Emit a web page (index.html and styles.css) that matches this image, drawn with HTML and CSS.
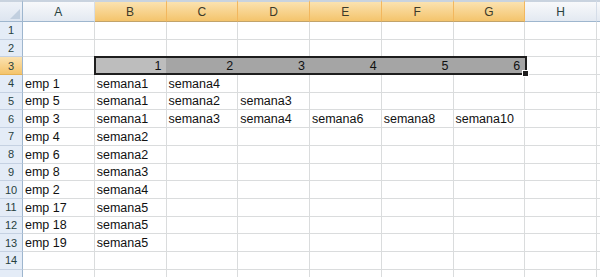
FILE: index.html
```html
<!DOCTYPE html>
<html>
<head>
  <meta charset="utf-8"/>
  <title>Hoja1</title>
  <link rel="stylesheet" href="styles.css">
</head>
<body>

<div class="sheet">
  <div class="corner"><span class="tri"></span></div>
  <div class="colhead">A</div>
  <div class="colhead sel">B</div>
  <div class="colhead sel">C</div>
  <div class="colhead sel">D</div>
  <div class="colhead sel">E</div>
  <div class="colhead sel">F</div>
  <div class="colhead sel">G</div>
  <div class="colhead">H</div>
  <div class="colhead"></div>

  <div class="rowhead">1</div><div class="cell"></div><div class="cell"></div><div class="cell"></div><div class="cell"></div><div class="cell"></div><div class="cell"></div><div class="cell"></div><div class="cell"></div><div class="cell"></div>
  <div class="rowhead">2</div><div class="cell"></div><div class="cell"></div><div class="cell"></div><div class="cell"></div><div class="cell"></div><div class="cell"></div><div class="cell"></div><div class="cell"></div><div class="cell"></div>
  <div class="rowhead sel">3</div><div class="cell"></div><div class="cell num active">1</div><div class="cell num shaded">2</div><div class="cell num shaded">3</div><div class="cell num shaded">4</div><div class="cell num shaded">5</div><div class="cell num shaded">6</div><div class="cell"></div><div class="cell"></div>
  <div class="rowhead">4</div><div class="cell">emp 1</div><div class="cell">semana1</div><div class="cell">semana4</div><div class="cell"></div><div class="cell"></div><div class="cell"></div><div class="cell"></div><div class="cell"></div><div class="cell"></div>
  <div class="rowhead">5</div><div class="cell">emp 5</div><div class="cell">semana1</div><div class="cell">semana2</div><div class="cell">semana3</div><div class="cell"></div><div class="cell"></div><div class="cell"></div><div class="cell"></div><div class="cell"></div>
  <div class="rowhead">6</div><div class="cell">emp 3</div><div class="cell">semana1</div><div class="cell">semana3</div><div class="cell">semana4</div><div class="cell">semana6</div><div class="cell">semana8</div><div class="cell">semana10</div><div class="cell"></div><div class="cell"></div>
  <div class="rowhead">7</div><div class="cell">emp 4</div><div class="cell">semana2</div><div class="cell"></div><div class="cell"></div><div class="cell"></div><div class="cell"></div><div class="cell"></div><div class="cell"></div><div class="cell"></div>
  <div class="rowhead">8</div><div class="cell">emp 6</div><div class="cell">semana2</div><div class="cell"></div><div class="cell"></div><div class="cell"></div><div class="cell"></div><div class="cell"></div><div class="cell"></div><div class="cell"></div>
  <div class="rowhead">9</div><div class="cell">emp 8</div><div class="cell">semana3</div><div class="cell"></div><div class="cell"></div><div class="cell"></div><div class="cell"></div><div class="cell"></div><div class="cell"></div><div class="cell"></div>
  <div class="rowhead">10</div><div class="cell">emp 2</div><div class="cell">semana4</div><div class="cell"></div><div class="cell"></div><div class="cell"></div><div class="cell"></div><div class="cell"></div><div class="cell"></div><div class="cell"></div>
  <div class="rowhead">11</div><div class="cell">emp 17</div><div class="cell">semana5</div><div class="cell"></div><div class="cell"></div><div class="cell"></div><div class="cell"></div><div class="cell"></div><div class="cell"></div><div class="cell"></div>
  <div class="rowhead">12</div><div class="cell">emp 18</div><div class="cell">semana5</div><div class="cell"></div><div class="cell"></div><div class="cell"></div><div class="cell"></div><div class="cell"></div><div class="cell"></div><div class="cell"></div>
  <div class="rowhead">13</div><div class="cell">emp 19</div><div class="cell">semana5</div><div class="cell"></div><div class="cell"></div><div class="cell"></div><div class="cell"></div><div class="cell"></div><div class="cell"></div><div class="cell"></div>
  <div class="rowhead">14</div><div class="cell"></div><div class="cell"></div><div class="cell"></div><div class="cell"></div><div class="cell"></div><div class="cell"></div><div class="cell"></div><div class="cell"></div><div class="cell"></div>
  <div class="rowhead"></div><div class="cell"></div><div class="cell"></div><div class="cell"></div><div class="cell"></div><div class="cell"></div><div class="cell"></div><div class="cell"></div><div class="cell"></div><div class="cell"></div>

  <!-- selection box over B3:G3 -->
  <div class="selection"><span class="handle"></span></div>
</div>

</body>
</html>
```

FILE: styles.css
```css
body {
  margin: 0;
  overflow: hidden;
  background: #fff;
  font-family: "Liberation Sans", Arial, sans-serif;
}
.sheet {
  position: relative;
  display: grid;
  grid-template-columns: 23px repeat(9, 71.75px);
  grid-template-rows: 22px repeat(15, 17.7px);
  width: 600px;
  overflow: hidden;
}
.corner, .colhead, .rowhead, .cell {
  box-sizing: border-box;
}
.corner {
  position: relative;
  background: linear-gradient(#eef2f8, #dde5f0);
  border-right: 1px solid #9eb6ce;
  border-bottom: 1px solid #9eb6ce;
  border-top: 2px solid #c9d3df;
}
.tri {
  position: absolute;
  right: 2px;
  bottom: 2px;
  width: 0;
  height: 0;
  border-left: 10px solid transparent;
  border-bottom: 10px solid #c1cfdf;
}
.colhead {
  display: flex;
  align-items: center;
  justify-content: center;
  padding-top: 1px;
  font-size: 12px;
  color: #27413e;
  background: linear-gradient(#f8f9fb, #e3e9f1);
  border-top: 2px solid #c9d3df;
  border-right: 1px solid #d5dde8;
  border-bottom: 1px solid #9eb6ce;
}
.colhead.sel {
  background: linear-gradient(#fbe2b0, #f4c46c);
  border-right-color: #f2b75e;
  border-bottom-color: #c2a36a;
  color: #3c3a2a;
}
.rowhead {
  display: flex;
  align-items: center;
  justify-content: center;
  font-size: 11px;
  color: #27413e;
  background: #e4ecf7;
  border-right: 1px solid #9eb6ce;
  border-bottom: 1px solid #c5d1e2;
}
.rowhead.sel {
  background: linear-gradient(#fbe2b0, #f4c46c);
  border-bottom-color: #e5b255;
}
.cell {
  display: flex;
  align-items: flex-end;
  padding: 0 2px 1px 2px;
  font-size: 12.5px;
  color: #111;
  white-space: nowrap;
  border-right: 1px solid #dadcdd;
  border-bottom: 1px solid #dadcdd;
}
.cell.num {
  justify-content: flex-end;
  padding-right: 4px;
}
.cell.active {
  background: #bdbdbd;
  border-right-color: #a5a5a5;
}
.cell.shaded {
  background: #a5a5a5;
  border-right-color: #a5a5a5;
}
.selection {
  position: absolute;
  left: 94px;
  top: 56px;
  width: 433px;
  height: 19px;
  box-sizing: border-box;
  border: 2px solid #1e1e1e;
  pointer-events: none;
}
.handle {
  position: absolute;
  right: -4px;
  bottom: -4px;
  width: 5px;
  height: 5px;
  background: #1e1e1e;
  border: 1px solid #fff;
}
```
